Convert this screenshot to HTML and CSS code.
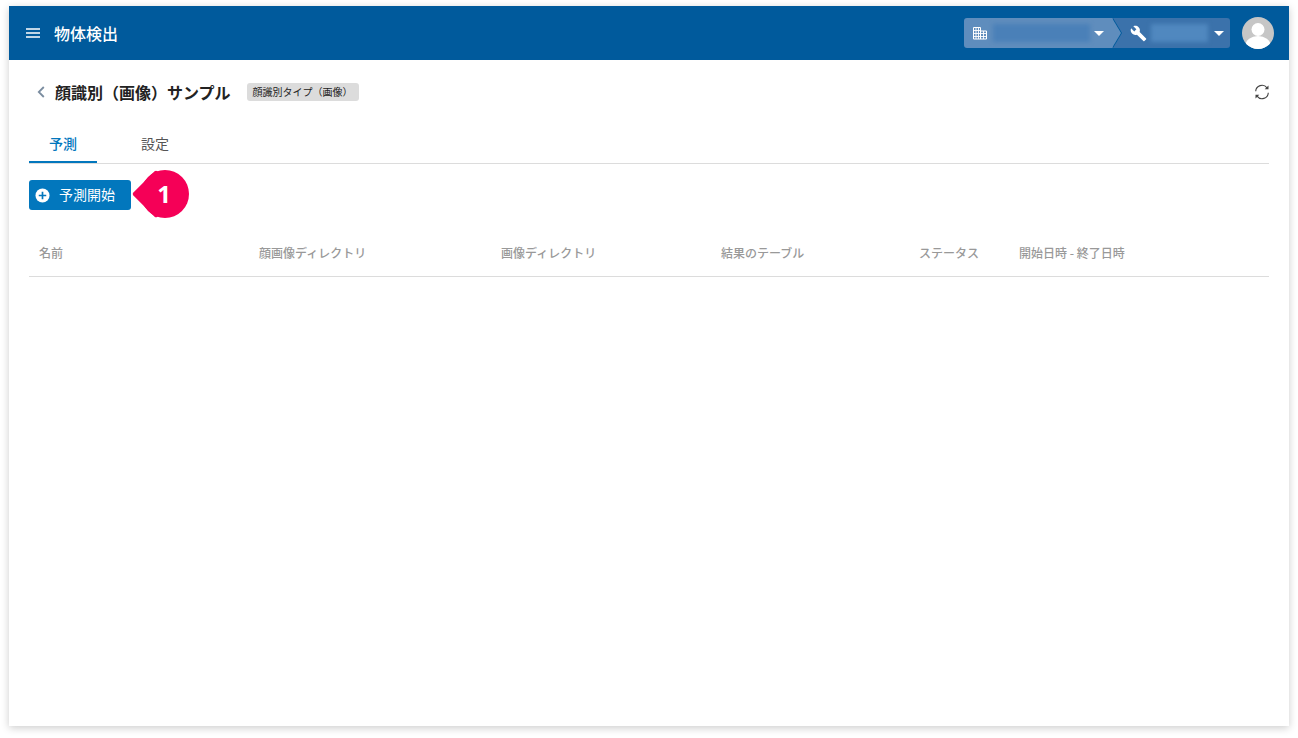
FILE: index.html
```html
<!DOCTYPE html>
<html lang="ja">
<head>
<meta charset="utf-8">
<title>物体検出</title>
<link rel="stylesheet" href="styles.css">
</head>
<body>
<div class="app">
  <header class="topbar">
    <svg class="menu-icon" viewBox="0 0 14 10" width="14" height="10"><path d="M0 1h14M0 5h14M0 9h14" stroke="#fff" stroke-width="1.4" fill="none"/></svg>
    <div class="app-title">物体検出</div>
    <div class="crumbs">
      <div class="crumb crumb-org">
        <svg class="org-icon" viewBox="0 0 14 14" width="14" height="14"><g fill="none" stroke="#fff" stroke-width="1"><path d="M.5 13V1.500h7V13M7.500 5h6v8H.5"/><path d="M.5 4.500h7M.5 7.500h13M.5 10.500h13M3 1.500V13M5.500 1.500V13M10.500 5V13" stroke-width=".9"/></g></svg>
        <span class="blur blur-org"></span>
        <span class="caret"></span>
      </div>
      <div class="crumb crumb-tool">
        <svg class="tool-icon" viewBox="0 0 24 24" width="20" height="20"><path fill="#fff" d="M22.700 19l-9.100-9.100c.9-2.300.4-5-1.500-6.900-2-2-5-2.400-7.400-1.300L9 6 6 9 1.600 4.700C.4 7.100.9 10.100 2.900 12.100c1.900 1.900 4.600 2.400 6.900 1.500l9.100 9.100c.4.400 1 .4 1.400 0l2.300-2.300c.5-.4.500-1.100.1-1.400z"/></svg>
        <span class="blur blur-tool"></span>
        <span class="caret"></span>
      </div>
    </div>
    <svg class="avatar" viewBox="0 0 32 32" width="32" height="32"><defs><clipPath id="av"><circle cx="16" cy="16" r="16"/></clipPath></defs><g clip-path="url(#av)"><rect width="32" height="32" fill="#c6c6c6"/><circle cx="16" cy="12.500" r="6.500" fill="#fff"/><ellipse cx="16" cy="28" rx="12.500" ry="9" fill="#fff"/></g></svg>
  </header>
  <main class="content">
    <div class="title-row">
      <svg class="back" viewBox="0 0 8 12" width="8" height="12"><path d="M6.800 1L1.800 6l5 5" stroke="#7b8da0" stroke-width="1.800" fill="none"/></svg>
      <h1 class="title">顔識別（画像）サンプル</h1>
      <span class="badge">顔識別タイプ（画像）</span>
      <svg class="refresh" viewBox="0 0 16 16" width="16" height="16"><g fill="none" stroke="#444" stroke-width="1.100"><path d="M1.700 7.300A6.300 6.300 0 0 1 13 3.800"/><path d="M14.300 8.700A6.300 6.300 0 0 1 3 12.200"/></g><path fill="#444" d="M14.500 1.500v3.800h-3.800zM1.500 14.500v-3.800h3.800z"/></svg>
    </div>
    <nav class="tabs">
      <div class="tab tab-active">予測</div>
      <div class="tab">設定</div>
    </nav>
    <div class="actions">
      <button class="primary">
        <svg viewBox="0 0 16 16" width="15" height="15"><circle cx="8" cy="8" r="7.500" fill="#fff"/><path d="M8 4v8M4 8h8" stroke="#0277bd" stroke-width="1.800"/></svg>
        <span>予測開始</span>
      </button>
      <div class="pin"><span class="pin-shape"></span><span class="pin-num">1</span></div>
    </div>
    <div class="table-head">
      <div>名前</div>
      <div>顔画像ディレクトリ</div>
      <div>画像ディレクトリ</div>
      <div>結果のテーブル</div>
      <div>ステータス</div>
      <div>開始日時 - 終了日時</div>
    </div>
  </main>
</div>
</body>
</html>
```
FILE: styles.css
```css
* { box-sizing: border-box; }
html, body { margin: 0; height: 100%; background: #fff; overflow: hidden; }
body { padding: 6px 9px 12px; font-family: "Noto Sans CJK JP", "Noto Sans", sans-serif; }
.app { width: 1280px; height: 720px; background: #fff; box-shadow: 0 2px 8px rgba(0,0,0,.2); display: flex; flex-direction: column; }
.topbar { height: 54px; background: #005a9c; display: flex; align-items: center; padding-left: 17px; color: #fff; flex: none; }
.menu-icon { flex: none; }
.app-title { margin-left: 14px; font-size: 16px; line-height: 24px; font-weight: 500; }
.crumbs { margin-left: auto; display: flex; height: 30px; }
.crumb { display: flex; align-items: center; height: 30px; position: relative; }
.crumb-org { width: 148px; background: #5f8dbd; border-radius: 3px 0 0 3px; padding-left: 9px; }
.crumb-org::after { content: ""; position: absolute; left: 148px; top: 0; width: 0; height: 0; border-top: 15px solid transparent; border-bottom: 15px solid transparent; border-left: 9px solid #5f8dbd; z-index: 2; }
.crumb-org::before { content: ""; position: absolute; left: 149px; top: 0; width: 0; height: 0; border-top: 15px solid transparent; border-bottom: 15px solid transparent; border-left: 9px solid #005a9c; z-index: 1; }
.crumb-tool { width: 118px; background: #3b72ab; border-radius: 0 3px 3px 0; padding-left: 18px; }
.org-icon { flex: none; }
.tool-icon { width: 17px; height: 17px; flex: none; }
.blur { display: block; height: 18px; filter: blur(2px); flex: none; }
.blur-org { width: 97px; margin-left: 6px; background: #4a80b8; }
.blur-tool { width: 57px; margin-left: 4px; background: #5088bf; }
.caret { width: 0; height: 0; border-left: 5px solid transparent; border-right: 5px solid transparent; border-top: 5px solid #fff; flex: none; }
.crumb-org .caret { margin-left: 4px; }
.crumb-tool .caret { margin-left: 6px; }
.avatar { margin-left: 12px; margin-right: 15px; flex: none; }
.content { flex: 1; padding: 0 20px; }
.title-row { display: flex; align-items: center; height: 24px; margin-top: 20px; padding-left: 8px; }
.back { flex: none; }
.title { margin: 0 0 0 10px; font-size: 16px; line-height: 24px; font-weight: 700; color: #222; }
.badge { margin-left: 16px; height: 18px; width: 112px; background: #dcdcdc; border-radius: 3px; font-size: 10px; line-height: 18px; color: #222; text-align: center; }
.refresh { margin-left: auto; margin-right: -1px; flex: none; }
.tabs { display: flex; margin-top: 20px; height: 40px; border-bottom: 1px solid #dcdcdc; }
.tab { width: 68px; height: 39px; margin-right: 24px; font-size: 14px; line-height: 38px; text-align: center; color: #555; }
.tab-active { color: #0277bd; border-bottom: 2px solid #0277bd; font-weight: 500; }
.actions { position: relative; margin-top: 16px; height: 30px; }
.primary { display: flex; align-items: center; width: 102px; height: 30px; padding: 0 0 0 6px; border: 0; border-radius: 3px; background: #0277bd; color: #fff; font-family: inherit; font-size: 14px; }
.primary span { margin-left: 9px; margin-bottom: 2px; line-height: 20px; }
.primary svg { flex: none; }
.pin { position: absolute; left: 103px; top: -10px; width: 58px; height: 48px; }
.pin-shape { position: absolute; left: 9px; top: 0; width: 48px; height: 48px; border-radius: 50%; background: #f50057; }
.pin-shape::before { content: ""; position: absolute; left: -2px; top: 7px; width: 34px; height: 34px; background: #f50057; transform: rotate(45deg); border-radius: 2px; }
.pin-num { position: absolute; left: 25px; top: 0; width: 14px; font-size: 24px; font-weight: 700; line-height: 48px; color: #fff; text-align: center; font-family: "Noto Sans", sans-serif; }
.table-head { display: grid; grid-template-columns: 220px 242px 220px 198px 100px 1fr; margin-top: 24px; height: 43px; border-bottom: 1px solid #dcdcdc; font-size: 12px; line-height: 38px; font-weight: 500; color: #999; }
.table-head div { padding-left: 10px; }
```
